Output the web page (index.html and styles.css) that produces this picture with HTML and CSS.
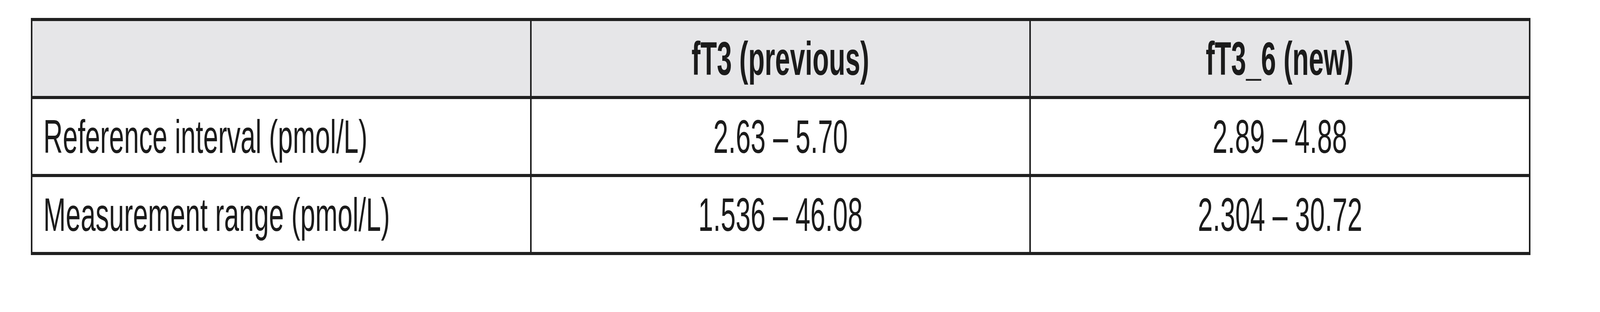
FILE: index.html
```html
<!DOCTYPE html>
<html lang="en">
<head>
<meta charset="utf-8">
<title>fT3 comparison</title>
<link rel="stylesheet" href="styles.css">
</head>
<body>
<table class="cmp">
  <colgroup>
    <col class="c1"><col class="c2"><col class="c3">
  </colgroup>
  <thead>
    <tr>
      <th class="label"></th>
      <th><span class="t">fT3 (previous)</span></th>
      <th><span class="t">fT3_6 (new)</span></th>
    </tr>
  </thead>
  <tbody>
    <tr>
      <td class="label"><span class="t">Reference interval (pmol/L)</span></td>
      <td><span class="t">2.63 – 5.70</span></td>
      <td><span class="t">2.89 – 4.88</span></td>
    </tr>
    <tr>
      <td class="label"><span class="t">Measurement range (pmol/L)</span></td>
      <td><span class="t">1.536 – 46.08</span></td>
      <td><span class="t">2.304 – 30.72</span></td>
    </tr>
  </tbody>
</table>
</body>
</html>
```

FILE: styles.css
```css
:root {
  /* the reference frame is 7145 x 800; map its pixels onto the viewport */
  --u: calc(100vw / 7145);
  --v: calc(100vh / 800);
  --sx: 0.5733;
}
html, body {
  margin: 0;
  padding: 0;
  background: #ffffff;
}
body {
  padding: calc(46 * var(--v)) 0 0 calc(137 * var(--u));
  font-family: "Liberation Sans", Arial, sans-serif;
  color: #1b1b1b;
}
.cmp {
  border-collapse: collapse;
  table-layout: fixed;
  width: calc(6697 * var(--u));
  font-size: calc(120 * var(--v));
}
.cmp col { width: 33.333%; }
.cmp th,
.cmp td {
  height: calc(192 * var(--v));
  padding: 0;
  border-top: calc(8 * var(--v)) solid #202020;
  border-bottom: calc(8 * var(--v)) solid #202020;
  border-left: calc(7 * var(--u)) solid #202020;
  border-right: calc(7 * var(--u)) solid #202020;
  text-align: center;
  vertical-align: middle;
  white-space: nowrap;
  line-height: 1.15;
  overflow: visible;
}
.cmp th {
  background: #e6e6e8;
  font-weight: bold;
}
.cmp .label {
  text-align: left;
  padding-left: calc(50 * var(--u));
}
.t {
  display: inline-block;
  transform: scaleX(var(--sx));
  transform-origin: center center;
}
.label .t {
  transform-origin: left center;
}
```
